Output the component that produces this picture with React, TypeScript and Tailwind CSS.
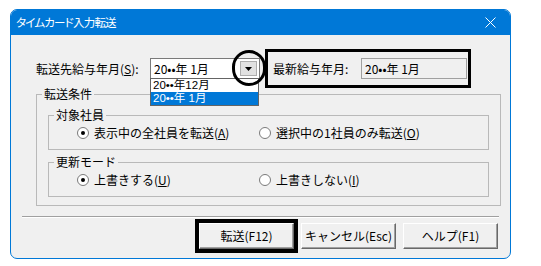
import React from "react";

const font = "font-['Noto_Sans_CJK_JP','Noto_Sans',sans-serif]";

function Radio({ checked }: { checked?: boolean }) {
  return (
    <span className="relative inline-flex w-[12px] h-[12px] rounded-full border border-[#7a7a7a] bg-white items-center justify-center shrink-0">
      {checked && <span className="w-[4px] h-[4px] rounded-full bg-black" />}
    </span>
  );
}

function Group({ label, className, children }: { label: string; className?: string; children?: React.ReactNode }) {
  return (
    <div className={`relative border border-[#b9b9b9] ${className ?? ""}`}>
      <span className="absolute -top-[9px] left-[5px] bg-[#f0f0f0] px-[2px] leading-[16px] text-[12px]">{label}</span>
      {children}
    </div>
  );
}

function Btn({ children }: { children: React.ReactNode }) {
  return (
    <div className="w-[95px] h-[26px] flex items-center justify-center bg-[#f0f0f0] border border-t-white border-l-white border-r-[#696969] border-b-[#696969] shadow-[inset_-1px_-1px_0_#a0a0a0] text-[12px]">
      {children}
    </div>
  );
}

export default function App() {
  return (
    <div className={`w-[541px] h-[266px] bg-white pt-[9px] pl-[10px] ${font} text-black`}>
      <div className="w-[501px] h-[250px] border border-[#0078d7] rounded-[7px] overflow-hidden flex flex-col bg-[#f0f0f0]">
        <div className="h-[25px] bg-[#0078d7] flex items-center justify-between pl-[5px] pr-[14px] text-white shrink-0">
          <span className="text-[11.5px] [font-feature-settings:'palt'] tracking-[-0.8px]">タイムカード入力転送</span>
          <svg width="11" height="11" viewBox="0 0 11 11">
            <path d="M0.5 0.5 L10.5 10.5 M10.5 0.5 L0.5 10.5" stroke="white" strokeWidth="1" />
          </svg>
        </div>
        <div className="relative flex-1 flex flex-col">
          {/* row 1 */}
          <div className="flex items-center mt-[23px] pl-[25px] h-[21px]">
            <span className="w-[114px] text-[12px] whitespace-nowrap">
              転送先給与年月(<span className="underline">S</span>):
            </span>
            <div className="relative w-[110px] h-[21px] bg-white border border-[#7a7a7a] flex items-center">
              <span className="pl-[3px] text-[12px] leading-none">20••年 1月</span>
              <div className="absolute right-[2px] top-[2px] w-[17px] h-[15px] bg-[#e1e1e1] border border-[#adadad] flex items-center justify-center">
                <svg width="7" height="4" viewBox="0 0 7 4">
                  <path d="M0 0 H7 L3.5 4 Z" fill="black" />
                </svg>
              </div>
              <div className="absolute left-[-1px] top-[19px] w-[109px] bg-white border border-[#646464] z-10 text-[11.5px] leading-[13px] font-['Liberation_Sans','Noto_Sans_CJK_JP',sans-serif]">
                <div className="pl-[2px] h-[13px] flex items-center">20••年12月</div>
                <div className="pl-[2px] h-[13px] flex items-center bg-[#0078d7] text-white">20••年 1月</div>
              </div>
              <div className="absolute right-[-7px] top-[-9px] w-[34px] h-[36px] rounded-full border-[3px] border-black z-20" />
            </div>
            <div className="relative ml-[13px] flex items-center">
              <span className="w-[88px] text-[12px] whitespace-nowrap">最新給与年月:</span>
              <div className="w-[106px] h-[21px] border border-[#a0a0a0] flex items-center pl-[3px] text-[12px]">20••年 1月</div>
              <div className="absolute left-[-8px] top-[-9px] w-[206px] h-[39px] border-[3px] border-black" />
            </div>
          </div>

          <Group label="転送条件" className="ml-[25px] mt-[15px] w-[465px] h-[112px] pt-[20px] pl-[11px]">
            <Group label="対象社員" className="w-[441px] h-[35px] flex items-center text-[12px]">
              <div className="flex items-center gap-[5px] pl-[28px] w-[210px]">
                <Radio checked />
                <span>表示中の全社員を転送(<span className="underline">A</span>)</span>
              </div>
              <div className="flex items-center gap-[5px]">
                <Radio />
                <span>選択中の1社員のみ転送(<span className="underline">O</span>)</span>
              </div>
            </Group>
            <Group label="更新モード" className="mt-[12px] w-[441px] h-[35px] flex items-center text-[12px]">
              <div className="flex items-center gap-[5px] pl-[28px] w-[210px]">
                <Radio checked />
                <span>上書きする(<span className="underline">U</span>)</span>
              </div>
              <div className="flex items-center gap-[5px]">
                <Radio />
                <span>上書きしない(<span className="underline">I</span>)</span>
              </div>
            </Group>
          </Group>

          <div className="ml-[11px] mr-[11px] mt-[10px] border-t border-[#a0a0a0] border-b border-b-white" />

          <div className="flex justify-end gap-[7px] pr-[12px] mt-[5px]">
            <div className="relative">
              <Btn>転送(F12)</Btn>
              <div className="absolute -left-[4px] -top-[4px] w-[103px] h-[34px] border-[4px] border-black" />
            </div>
            <Btn>キャンセル(Esc)</Btn>
            <Btn>ヘルプ(F1)</Btn>
          </div>
        </div>
      </div>
    </div>
  );
}
